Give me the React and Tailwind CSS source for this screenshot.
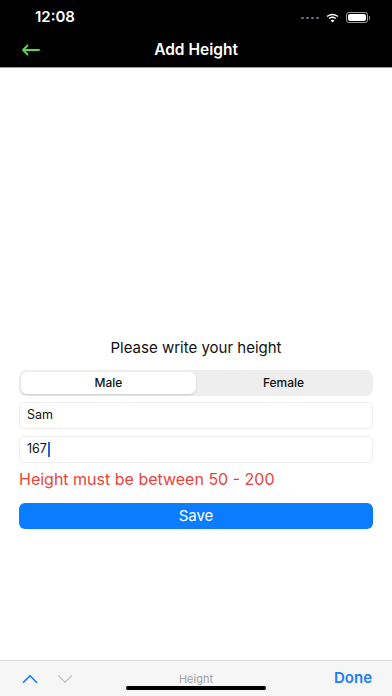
import { ChevronUp, ChevronDown } from "lucide-react";

const StatusBar = () => (
  <div className="flex h-[33px] items-center justify-between pl-[35px] pr-[22px] pt-[2px]">
    <span className="text-[15px] font-semibold text-white">12:08</span>
    <div className="flex items-center gap-[7px]">
      <div className="flex gap-[2px]">
        <span className="h-[2px] w-[3px] rounded-full bg-gray-500" />
        <span className="h-[2px] w-[3px] rounded-full bg-gray-500" />
        <span className="h-[2px] w-[3px] rounded-full bg-gray-500" />
        <span className="h-[2px] w-[3px] rounded-full bg-gray-500" />
      </div>
      <svg width="13" height="10" viewBox="0 0 13 10" fill="white">
        <path d="M6.5 2.2c1.9 0 3.6.7 4.9 1.9l1-1C10.9 1.6 8.8.7 6.5.7S2.1 1.6.6 3.1l1 1c1.3-1.2 3-1.9 4.9-1.9z" />
        <path d="M6.5 5c1.1 0 2.1.4 2.9 1.1l1-1C9.3 4.1 8 3.5 6.5 3.5S3.7 4.1 2.6 5.1l1 1C4.4 5.4 5.4 5 6.5 5z" />
        <path d="M6.5 9.6 8.4 7.6C7.9 7.1 7.2 6.8 6.5 6.8S5.1 7.1 4.6 7.6z" />
      </svg>
      <div className="flex items-center">
        <div className="flex h-[11px] w-[22px] items-center rounded-[3px] border border-white/60 p-[1px]">
          <div className="h-full w-full rounded-[2px] bg-white" />
        </div>
        <div className="ml-[1px] h-[4px] w-[1.5px] rounded-r bg-white/60" />
      </div>
    </div>
  </div>
);

const NavBar = () => (
  <div className="relative flex h-[35px] items-center justify-center border-b border-[#9a9a9a]">
    <svg
      className="absolute left-[21px] top-[11px]"
      width="20"
      height="12"
      viewBox="0 0 20 12"
      fill="none"
      stroke="#5ed64a"
      strokeWidth="1.8"
      strokeLinecap="round"
      strokeLinejoin="round"
    >
      <path d="M18 6H2M6.5 1.5 2 6l4.5 4.5" />
    </svg>
    <span className="text-[15.5px] font-semibold text-white">Add Height</span>
  </div>
);

export default function App() {
  return (
    <div
      className="flex h-[696px] w-full flex-col overflow-hidden bg-white"
      style={{ fontFamily: "Inter, 'Noto Sans', sans-serif" }}
    >
      <div className="bg-black">
        <StatusBar />
        <NavBar />
      </div>

      <div className="flex flex-1 flex-col px-[19px] pt-[270px]">
        <p className="text-center text-[15px] leading-[19px] text-[#111]">
          Please write your height
        </p>

        <div className="mt-[13px] flex h-[26px] rounded-[7px] bg-[#eeeeef] p-[2px]">
          <div className="flex flex-1 items-center justify-center rounded-[6px] bg-white text-[12px] font-medium text-[#111] shadow-[0_1px_2px_rgba(0,0,0,0.15)]">
            Male
          </div>
          <div className="flex flex-1 items-center justify-center text-[12px] font-medium text-[#111]">
            Female
          </div>
        </div>

        <div className="mt-[6px] flex h-[27px] items-center rounded-[5px] border border-[#ececec] px-[7px] text-[12.5px] text-[#111]">
          Sam
        </div>
        <div className="mt-[7px] flex h-[27px] items-center rounded-[5px] border border-[#ececec] px-[7px] text-[12.5px] text-[#111]">
          167
          <span className="ml-[1px] h-[15px] w-[2px] bg-[#2f5fd0]" />
        </div>

        <p className="mt-[5px] text-[16px] leading-[22px] text-[#e9443a]">
          Height must be between 50 - 200
        </p>

        <button className="mt-[13px] h-[26px] rounded-[6px] bg-[#0a7dff] text-[15px] text-white">
          Save
        </button>
      </div>

      <div className="relative flex h-[36px] items-center border-t border-[#dcdcdc] bg-[#f6f6f7] pl-[17px] pr-[20px]">
        <ChevronUp size={26} strokeWidth={1.6} color="#1d7cf2" />
        <ChevronDown size={26} strokeWidth={1.2} color="#c4c4c6" className="ml-[9px]" />
        <span className="absolute left-1/2 top-[10px] -translate-x-1/2 text-[11px] text-[#a3a3a3]">Height</span>
        <span className="ml-auto text-[15px] font-semibold text-[#1d7cf2]">Done</span>
        <div className="absolute bottom-[6px] left-1/2 h-[4px] w-[140px] -translate-x-1/2 rounded-full bg-black" />
      </div>
    </div>
  );
}
